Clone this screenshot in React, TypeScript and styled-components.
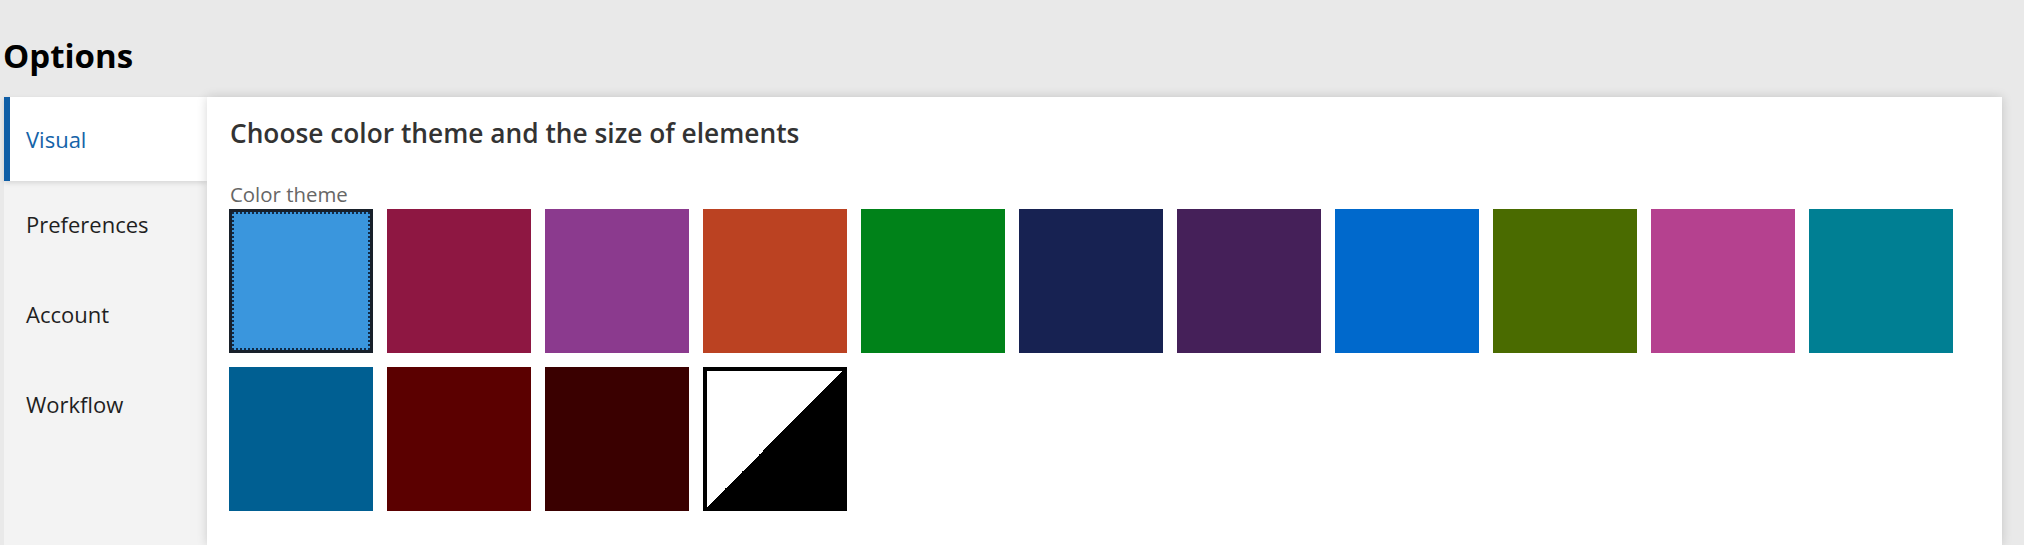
import React, { ReactElement } from 'react'
import styled, { createGlobalStyle } from 'styled-components'

const GlobalStyle = createGlobalStyle`
  html, body {
    margin: 0;
    padding: 0;
    background: #e9e9e9;
    font-family: "Open Sans", "Noto Sans", Arial, sans-serif;
  }
`

const Page = styled("div")`
  height: 545px;
  padding: 0 22px 0 4px;
  display: flex;
  flex-direction: column;
  box-sizing: border-box;
  overflow: hidden;
`

const Title = styled("h1")`
  margin: 36px 0 21px -1px;
  font-size: 33px;
  line-height: 40px;
  font-weight: 700;
  color: #000;
`

const Body = styled("div")`
  flex: 1;
  display: flex;
  min-height: 0;
`

const Sidebar = styled("nav")`
  width: 203px;
  flex-shrink: 0;
  background: #f3f3f3;
  display: flex;
  flex-direction: column;
`

const NavItem = styled("div")<{ $active?: boolean }>`
  height: ${({ $active }) => ($active ? '84px' : '90px')};
  box-sizing: border-box;
  padding: ${({ $active }) => ($active ? '27px' : '28px')} 0 0 16px;
  font-size: 22px;
  line-height: 30px;
  color: ${({ $active }) => ($active ? '#1463a8' : '#1f1f1f')};
  background: ${({ $active }) => ($active ? '#fff' : 'transparent')};
  border-left: 6px solid ${({ $active }) => ($active ? '#0f5ea6' : 'transparent')};
  box-shadow: ${({ $active }) => ($active ? '0 2px 5px rgba(0, 0, 0, 0.12)' : 'none')};
  position: relative;
`

const Panel = styled("main")`
  flex: 1;
  background: #fff;
  box-shadow: 0 0 10px rgba(0, 0, 0, 0.16);
  padding: 19px 0 0 23px;
  position: relative;
  z-index: 1;
`

const Heading = styled("h2")`
  margin: 0 0 32px;
  font-size: 26.3px;
  line-height: 34px;
  font-weight: 600;
  color: #333;
`

const Label = styled("div")`
  font-size: 20.4px;
  line-height: 24px;
  color: #666;
  margin-bottom: 3px;
`

const Swatches = styled("div")`
  display: flex;
  flex-wrap: wrap;
  gap: 14px;
  margin-left: -1px;
`

const Swatch = styled("div")<{ $color: string; $selected?: boolean }>`
  width: 144px;
  height: 144px;
  box-sizing: border-box;
  background: ${({ $color }) => $color};
  border: ${({ $selected }) => ($selected ? '3px solid #18202a' : 'none')};
  position: relative;

  &::after {
    content: '';
    display: ${({ $selected }) => ($selected ? 'block' : 'none')};
    position: absolute;
    inset: 0;
    border: 2px dotted rgba(10, 25, 45, 0.85);
  }
`

const ContrastSwatch = styled("div")`
  width: 144px;
  height: 144px;
  box-sizing: border-box;
  border: 4px solid #000;
  background: linear-gradient(to bottom right, #fff 50%, #000 50%);
`

const colors = [
  '#3a96dd', '#8e1742', '#8b3a8e', '#bb4222', '#008219', '#172252',
  '#452059', '#0069cc', '#4a6b00', '#b5418f', '#007f93',
  '#005f92', '#5b0000', '#3a0000',
]

const navItems = ['Visual', 'Preferences', 'Account', 'Workflow']

export default function App(): ReactElement {
  return (
    <>
      <GlobalStyle />
      <Page>
        <Title>Options</Title>
        <Body>
          <Sidebar>
            {navItems.map((name, i) => (
              <NavItem key={name} $active={i === 0}>{name}</NavItem>
            ))}
          </Sidebar>
          <Panel>
            <Heading>Choose color theme and the size of elements</Heading>
            <Label>Color theme</Label>
            <Swatches>
              {colors.map((c, i) => (
                <Swatch key={c} $color={c} $selected={i === 0} />
              ))}
              <ContrastSwatch />
            </Swatches>
          </Panel>
        </Body>
      </Page>
    </>
  )
}
